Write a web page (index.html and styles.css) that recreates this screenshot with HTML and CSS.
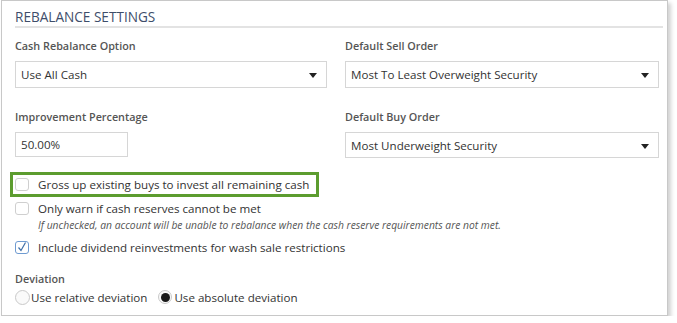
FILE: index.html
```html
<!DOCTYPE html>
<html lang="en">
<head>
    <meta charset="UTF-8">
    <title>Rebalance Settings</title>
    <link rel="stylesheet" href="styles.css">
</head>
<body>
    <div class="panel">
        <h3 class="panel-title">REBALANCE SETTINGS</h3>

        <div class="form-grid">
            <div class="field">
                <label>Cash Rebalance Option</label>
                <div class="select">Use All Cash<span class="caret"></span></div>
            </div>
            <div class="field">
                <label>Default Sell Order</label>
                <div class="select">Most To Least Overweight Security<span class="caret"></span></div>
            </div>
            <div class="field">
                <label>Improvement Percentage</label>
                <div class="text-input">50.00%</div>
            </div>
            <div class="field">
                <label>Default Buy Order</label>
                <div class="select tall">Most Underweight Security<span class="caret"></span></div>
            </div>
        </div>

        <!-- highlighted option -->
        <div class="highlight">
            <div class="check-row">
                <span class="checkbox"></span>
                <span>Gross up existing buys to invest all remaining cash</span>
            </div>
        </div>

        <div class="check-row">
            <span class="checkbox"></span>
            <span>Only warn if cash reserves cannot be met</span>
        </div>
        <div class="note">If unchecked, an account will be unable to rebalance when the cash reserve requirements are not met.</div>

        <div class="check-row third">
            <span class="checkbox checked">
                <svg width="12" height="12" viewBox="0 0 12 12"><polyline points="2.5,6.5 5,9.5 9.5,1.5" fill="none" stroke="#3f6fa8" stroke-width="1.2"/></svg>
            </span>
            <span>Include dividend reinvestments for wash sale restrictions</span>
        </div>

        <div class="group-label">Deviation</div>
        <div class="radio-row">
            <span class="radio"></span>
            <span class="radio-text">Use relative deviation</span>
            <span class="radio selected"><span class="dot"></span></span>
            <span>Use absolute deviation</span>
        </div>
    </div>
</body>
</html>
```

FILE: styles.css
```css
body {
    margin: 0;
    background: #fff;
    font-family: "Open Sans", "Noto Sans", sans-serif;
    font-size: 11.6px;
    color: #333;
}
.panel {
    margin-left: 1px;
    width: 648px;
    height: 307px;
    border: 1px solid #c8c8c8;
    padding: 7px 4px 0 13px;
    box-shadow: 3px 3px 4px rgba(0, 0, 0, 0.18);
}
.panel-title {
    margin: 0;
    font-size: 13.6px;
    font-weight: normal;
    line-height: 18px;
    color: #3e4d6a;
    border-bottom: 2px solid #e3e3e3;
}
.form-grid {
    display: grid;
    grid-template-columns: 312px 314px;
    column-gap: 18px;
    row-gap: 20px;
    margin-top: 9px;
}
.field label {
    display: block;
    line-height: 18px;
    font-weight: 600;
    color: #555;
    font-size: 10.8px;
    margin-bottom: 6px;
}
.select {
    position: relative;
    box-sizing: border-box;
    height: 27px;
    line-height: 26px;
    border: 1px solid #d6d6d6;
    padding-left: 5px;
}
.select.tall {
    height: 26px;
    line-height: 25px;
}
.caret {
    position: absolute;
    right: 9px;
    top: 11px;
    border-left: 4px solid transparent;
    border-right: 4px solid transparent;
    border-top: 5px solid #222;
}
.text-input {
    box-sizing: border-box;
    width: 113px;
    height: 25px;
    line-height: 23px;
    border: 1px solid #d6d6d6;
    padding-left: 5px;
}
.highlight {
    display: flex;
    width: fit-content;
    margin: 14px 0 0 -5px;
    height: 19px;
    border: 3px solid #5c9c2f;
    padding: 0 7px 0 2px;
    white-space: nowrap;
}
.check-row {
    display: flex;
    align-items: center;
    gap: 9px;
    height: 22px;
    white-space: nowrap;
}
.highlight .check-row {
    height: 19px;
}
.check-row.third {
    margin-top: 5px;
}
.checkbox {
    box-sizing: border-box;
    width: 14px;
    height: 13px;
    border: 1px solid #cfcfcf;
    border-radius: 3px;
    background: #fff;
    display: flex;
    align-items: center;
    justify-content: center;
}
.checkbox.checked {
    border-color: #6f9bd1;
}
.note {
    margin-left: 23px;
    font-size: 10.3px;
    font-style: italic;
    color: #555;
    line-height: 12px;
    white-space: nowrap;
}
.group-label {
    margin-top: 12px;
    line-height: 18px;
    color: #555;
    font-weight: 600;
    font-size: 10.8px;
}
.radio-row {
    display: flex;
    align-items: center;
    height: 18px;
    white-space: nowrap;
}
.radio {
    box-sizing: border-box;
    width: 15px;
    height: 15px;
    border: 1px solid #c9c9c9;
    border-radius: 50%;
    background: #fafafa;
    margin-right: 1px;
    display: flex;
    align-items: center;
    justify-content: center;
}
.radio.selected {
    width: 14px;
    height: 14px;
    margin-right: 2px;
}
.radio .dot {
    width: 9px;
    height: 9px;
    border-radius: 50%;
    background: #1a1a1a;
}
.radio-text {
    margin-right: 11px;
}
```
